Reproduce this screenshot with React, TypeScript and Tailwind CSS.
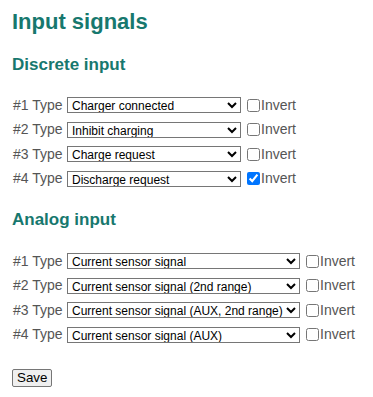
import React, { useState } from 'react';

const discreteOptions = ['Charger connected', 'Inhibit charging', 'Charge request', 'Discharge request'];
const analogOptions = [
  'Current sensor signal',
  'Current sensor signal (2nd range)',
  'Current sensor signal (AUX, 2nd range)',
  'Current sensor signal (AUX)',
];

const SignalRow = ({ index, options, value, inverted, wide }: {
  index: number; options: string[]; value: string; inverted: boolean; wide?: boolean;
}) => {
  const [sel, setSel] = useState(value);
  const [inv, setInv] = useState(inverted);
  return (
    <div className="flex items-center h-[24.5px]">
      <span className="text-[14px] text-[#555] w-[54px] shrink-0">#{index} Type</span>
      <select
        value={sel}
        onChange={(e) => setSel(e.target.value)}
        className={`${wide ? 'w-[233px]' : 'w-[174px]'} h-[16px] border border-[#767676] bg-white text-black text-[12px] leading-none`}
      >
        {options.map((o) => (
          <option key={o}>{o}</option>
        ))}
      </select>
      <label className="flex items-center ml-[6px] text-[14px] text-[#555]">
        <input
          type="checkbox"
          checked={inv}
          onChange={(e) => setInv(e.target.checked)}
          className="w-[13px] h-[13px] m-0 mr-[1px] accent-[#0075ff]"
        />
        Invert
      </label>
    </div>
  );
};

export default function App() {
  return (
    <div className="px-3 pt-[8px] font-['Liberation_Sans',Arial,sans-serif]">
      <h1 className="text-[22px] font-bold text-[#17786e] leading-[28px]">Input signals</h1>

      <h2 className="mt-[18px] text-[17px] font-bold text-[#17786e] leading-[22px]">Discrete input</h2>
      <div className="mt-[17px] pl-[1px]">
        {discreteOptions.map((o, i) => (
          <SignalRow key={o} index={i + 1} options={discreteOptions} value={o} inverted={i === 3} />
        ))}
      </div>

      <h2 className="mt-[18px] text-[17px] font-bold text-[#17786e] leading-[22px]">Analog input</h2>
      <div className="mt-[18px] pl-[1px]">
        {analogOptions.map((o, i) => (
          <SignalRow key={o} index={i + 1} options={analogOptions} value={o} inverted={false} wide />
        ))}
      </div>

      <button className="mt-[22px] px-[4px] h-[18px] border border-[#767676] bg-[#efefef] text-black text-[13.33px] leading-none rounded-[2px]">
        Save
      </button>
    </div>
  );
}
